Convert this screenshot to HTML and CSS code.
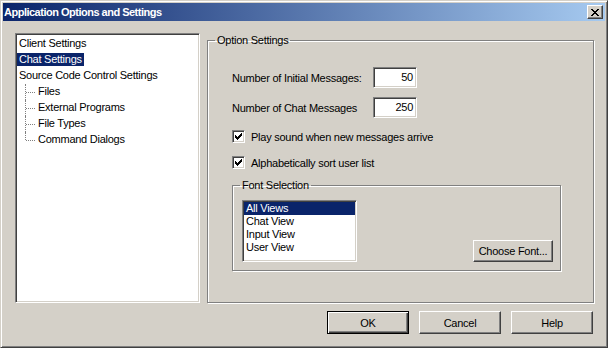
FILE: index.html
```html
<!DOCTYPE html>
<html lang="en">
<head>
    <meta charset="UTF-8">
    <title>Application Options and Settings</title>
    <link rel="stylesheet" href="styles.css">
</head>
<body>
    <div class="window">
        <!-- Title bar -->
        <div class="titlebar">
            <span class="title">Application Options and Settings</span>
            <button class="close-btn">
                <svg width="8" height="7" viewBox="0 0 8 7" shape-rendering="crispEdges">
                    <path fill="#000" d="M0 0h2v1h-2z M6 0h2v1h-2z M1 1h2v1h-2z M5 1h2v1h-2z M2 2h4v1h-4z M3 3h2v1h-2z M2 4h4v1h-4z M1 5h2v1h-2z M5 5h2v1h-2z M0 6h2v1h-2z M6 6h2v1h-2z"/>
                </svg>
            </button>
        </div>

        <div class="dialog-body">
            <div class="main-row">
                <!-- Settings tree -->
                <ul class="tree">
                    <li class="tree-item"><span>Client Settings</span></li>
                    <li class="tree-item selected"><span>Chat Settings</span></li>
                    <li class="tree-item"><span>Source Code Control Settings</span>
                        <ul class="tree-children">
                            <li><span>Files</span></li>
                            <li><span>External Programs</span></li>
                            <li><span>File Types</span></li>
                            <li><span>Command Dialogs</span></li>
                        </ul>
                    </li>
                </ul>

                <!-- Option settings -->
                <fieldset class="group options">
                    <legend>Option Settings</legend>
                    <div class="options-content">
                        <div class="num-row">
                            <label>Number of Initial Messages:</label>
                            <div class="textbox">50</div>
                        </div>
                        <div class="num-row">
                            <label>Number of Chat Messages</label>
                            <div class="textbox">250</div>
                        </div>
                        <div class="check-row">
                            <span class="checkbox">
                                <svg width="9" height="9" viewBox="0 0 9 9" shape-rendering="crispEdges">
                                    <path fill="#000" d="M7 1h1v1h-1z M6 2h2v1h-2z M1 3h1v1h-1z M5 3h3v1h-3z M1 4h2v1h-2z M4 4h3v1h-3z M1 5h5v1h-5z M2 6h3v1h-3z M3 7h1v1h-1z"/>
                                </svg>
                            </span>
                            <span>Play sound when new messages arrive</span>
                        </div>
                        <div class="check-row">
                            <span class="checkbox">
                                <svg width="9" height="9" viewBox="0 0 9 9" shape-rendering="crispEdges">
                                    <path fill="#000" d="M7 1h1v1h-1z M6 2h2v1h-2z M1 3h1v1h-1z M5 3h3v1h-3z M1 4h2v1h-2z M4 4h3v1h-3z M1 5h5v1h-5z M2 6h3v1h-3z M3 7h1v1h-1z"/>
                                </svg>
                            </span>
                            <span>Alphabetically sort user list</span>
                        </div>

                        <fieldset class="group font-group">
                            <legend>Font Selection</legend>
                            <div class="font-content">
                                <ul class="listbox">
                                    <li class="selected">All Views</li>
                                    <li>Chat View</li>
                                    <li>Input View</li>
                                    <li>User View</li>
                                </ul>
                                <button class="btn choose-font">Choose Font...</button>
                            </div>
                        </fieldset>
                    </div>
                </fieldset>
            </div>

            <div class="button-row">
                <button class="btn default">OK</button>
                <button class="btn">Cancel</button>
                <button class="btn">Help</button>
            </div>
        </div>
    </div>
</body>
</html>
```

FILE: styles.css
```css
* {
    box-sizing: border-box;
}
body {
    margin: 0;
    font-family: "Liberation Sans", Arial, sans-serif;
    font-size: 11px;
    letter-spacing: -0.25px;
    color: #000;
}
.window {
    width: 608px;
    height: 348px;
    background-color: #d4d0c8;
    border: 1px solid;
    border-color: #d4d0c8 #404040 #404040 #d4d0c8;
    box-shadow: inset 1px 1px #fff, inset -1px -1px #808080;
    padding: 2px;
    display: flex;
    flex-direction: column;
}
.titlebar {
    height: 18px;
    background: linear-gradient(to right, #0a246a, #a6caf0);
    display: flex;
    align-items: center;
    justify-content: space-between;
    padding: 0 2px 0 1px;
}
.title {
    color: #fff;
    font-weight: bold;
    letter-spacing: -0.5px;
}
.close-btn {
    width: 16px;
    height: 14px;
    padding: 0;
    background-color: #d4d0c8;
    border: 1px solid;
    border-color: #fff #404040 #404040 #fff;
    box-shadow: inset -1px -1px #808080;
    display: flex;
    align-items: center;
    justify-content: center;
}
.dialog-body {
    flex: 1;
    padding: 12px 11px 0 12px;
    display: flex;
    flex-direction: column;
}
.main-row {
    display: flex;
    gap: 7px;
    height: 270px;
}

/* tree */
.tree {
    width: 185px;
    margin: 0;
    list-style: none;
    background-color: #fff;
    border: 1px solid;
    border-color: #808080 #fff #fff #808080;
    box-shadow: inset 1px 1px #404040, inset -1px -1px #d4d0c8;
    padding: 2px 0 0 1px;
}
.tree-item > span,
.tree-children span {
    display: inline-block;
    line-height: 13px;
    padding: 0 2px;
    margin: 1px 0 2px;
}
.tree-item.selected > span {
    background-color: #0a246a;
    color: #fff;
}
.tree-children {
    list-style: none;
    margin: 0 0 0 8px;
    padding: 0;
}
.tree-children li {
    position: relative;
    padding-left: 11px;
}
.tree-children li::before {
    content: "";
    position: absolute;
    left: 0;
    top: 0;
    height: 100%;
    border-left: 1px dotted #808080;
}
.tree-children li:last-child::before {
    height: 8px;
}
.tree-children li::after {
    content: "";
    position: absolute;
    left: 1px;
    top: 8px;
    width: 9px;
    border-top: 1px dotted #808080;
}

/* group boxes */
.group {
    margin: 0;
    padding: 0;
    min-width: 0;
    border: 1px solid #808080;
    box-shadow: 1px 1px #fff, inset 1px 1px #fff;
}
.group legend {
    margin-left: 7px;
    padding: 0 2px;
    line-height: 13px;
}
.options {
    flex: 1;
    margin-top: 1px;
}
.options-content {
    padding: 20px 0 0 24px;
}
.num-row {
    display: flex;
    align-items: center;
    height: 21px;
}
.num-row + .num-row {
    margin-top: 9px;
}
.num-row label {
    width: 141px;
}
.textbox {
    width: 44px;
    height: 21px;
    background-color: #fff;
    border: 1px solid;
    border-color: #808080 #fff #fff #808080;
    box-shadow: inset 1px 1px #404040, inset -1px -1px #d4d0c8;
    text-align: right;
    padding-right: 3px;
    line-height: 19px;
}
.check-row {
    display: flex;
    align-items: center;
    gap: 6px;
    height: 13px;
    margin-top: 12px;
}
.check-row + .check-row {
    margin-top: 13px;
}
.checkbox {
    width: 13px;
    height: 13px;
    background-color: #fff;
    border: 1px solid;
    border-color: #808080 #fff #fff #808080;
    box-shadow: inset 1px 1px #404040, inset -1px -1px #d4d0c8;
    padding: 1px;
    display: flex;
}
.font-group {
    width: 329px;
    margin-top: 10px;
}
.font-content {
    display: flex;
    align-items: flex-end;
    justify-content: space-between;
    padding: 8px 7px 8px 9px;
}
.listbox {
    width: 115px;
    height: 62px;
    margin: 0;
    list-style: none;
    background-color: #fff;
    border: 1px solid;
    border-color: #808080 #fff #fff #808080;
    box-shadow: inset 1px 1px #404040, inset -1px -1px #d4d0c8;
    padding: 1px;
}
.listbox li {
    line-height: 13px;
    padding: 0 2px;
}
.listbox li.selected {
    background-color: #0a246a;
    color: #fff;
}

/* buttons */
.btn {
    font-family: inherit;
    font-size: 11px;
    letter-spacing: -0.25px;
    color: #000;
    padding: 0;
    background-color: #d4d0c8;
    border: 1px solid;
    border-color: #fff #404040 #404040 #fff;
    box-shadow: inset -1px -1px #808080;
}
.btn.default {
    border-color: #000;
    box-shadow: inset 1px 1px #fff, inset -1px -1px #404040, inset -2px -2px #808080;
}
.choose-font {
    width: 80px;
    height: 22px;
}
.button-row {
    display: flex;
    justify-content: flex-end;
    gap: 10px;
    margin-top: 8px;
    padding-right: 1px;
}
.button-row .btn {
    width: 82px;
    height: 23px;
}
```
